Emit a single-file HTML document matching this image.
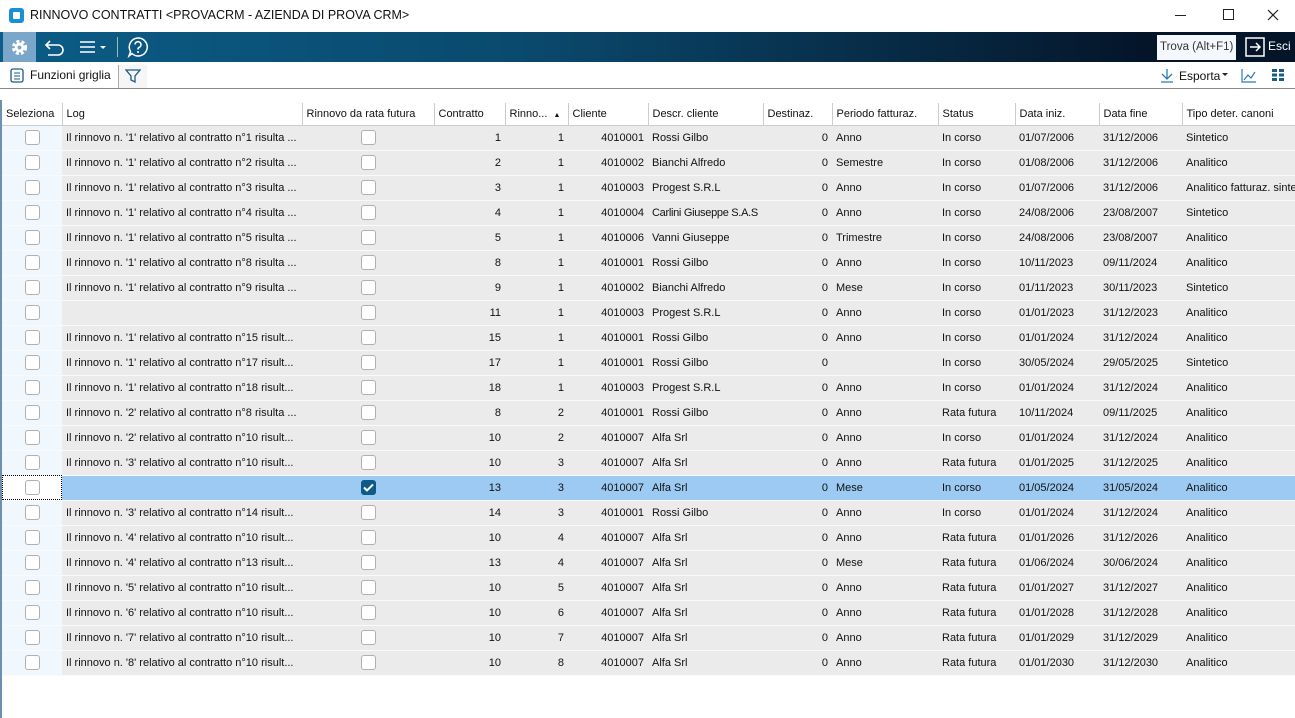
<!DOCTYPE html>
<html><head><meta charset="utf-8"><style>
*{box-sizing:border-box;margin:0;padding:0}
body{width:1295px;height:718px;overflow:hidden;background:#fff;font-family:"Liberation Sans",sans-serif;font-size:11px;color:#111;position:relative}
.title{position:absolute;left:0;top:0;width:1295px;height:32px;background:#fff;font-size:12.5px}
.tb{position:absolute;left:0;top:32px;width:1295px;height:30px;background:linear-gradient(90deg,#0b5c86 0%,#0a4a6e 40%,#061f36 80%,#04152a 88%,#04152a 100%)}
.sb{position:absolute;left:0;top:62px;width:1295px;height:27px;border-bottom:1px solid #888;background:#fff;font-size:12px}
table{position:absolute;left:2px;top:103px;border-collapse:collapse;table-layout:fixed;width:1293px}
td,th{height:25px;white-space:nowrap;overflow:hidden;text-overflow:ellipsis;padding:0 4px;font-weight:normal;border-bottom:1px solid #fafafa;background:#ebebeb}
th{height:22px;background:#fff;text-align:left;border-right:1px solid #ccc;border-bottom:1px solid #ccc;text-overflow:clip}
td.s{background:#f0f7fd;text-align:center}
td.r{text-align:right}
td.c{text-align:center}
.cb{display:inline-block;width:15px;height:15px;border:1px solid #b0b0b0;border-radius:3px;background:#fff;vertical-align:middle}
tr.sel td{background:#9ccaf2}
tr.sel td.s{background:#fff;outline:1px dotted #000;outline-offset:-1px}
.ck{display:inline-block;width:15px;height:15px;border-radius:3px;background:#0d5a87;vertical-align:middle;position:relative}
</style></head><body>
<div class="title">
<div style="position:absolute;left:9px;top:8px;width:15px;height:15px;background:#1a8fd6;border-radius:3px"><div style="position:absolute;left:4px;top:4px;width:7px;height:7px;background:#fff;border-radius:1px"></div></div>
<div style="position:absolute;left:30px;top:8px;color:#111">RINNOVO CONTRATTI &lt;PROVACRM - AZIENDA DI PROVA CRM&gt;</div>
<div style="position:absolute;left:1175px;top:15px;width:11px;height:1px;background:#222"></div>
<div style="position:absolute;left:1223px;top:9px;width:11px;height:11px;border:1px solid #222"></div>
<svg style="position:absolute;left:1267px;top:9px" width="12" height="12" viewBox="0 0 12 12"><path d="M1 1L11 11M11 1L1 11" stroke="#222" stroke-width="1.2"/></svg>
</div>
<div class="tb">
<div style="position:absolute;left:3px;top:0;width:33px;height:30px;background:#7aa7c9"></div>
<svg style="position:absolute;left:10px;top:6px" width="19" height="19" viewBox="0 0 20 20"><circle cx="10" cy="10" r="6" fill="none" stroke="#fff" stroke-width="4" stroke-dasharray="3 2"/><circle cx="10" cy="10" r="5" fill="#fff"/><circle cx="10" cy="10" r="2" fill="#7aa7c9"/></svg>
<svg style="position:absolute;left:44px;top:6px" width="22" height="18" viewBox="0 0 22 18"><path d="M6 3 L2 7 L6 11 M2 7 H14 A5 5 0 0 1 14 17 H4" fill="none" stroke="#fff" stroke-width="1.6"/></svg>
<svg style="position:absolute;left:80px;top:9px" width="28" height="12" viewBox="0 0 28 12"><path d="M0 1H15M0 6H15M0 11H15" stroke="#fff" stroke-width="1.5"/><path d="M20 5H26L23 8Z" fill="#fff"/></svg>
<div style="position:absolute;left:117px;top:5px;width:1px;height:20px;background:#9bb"></div>
<svg style="position:absolute;left:127px;top:4px" width="22" height="22" viewBox="0 0 22 22"><path d="M11 2A9 9 0 1 1 5 17.5L2 20L3.5 15.5A9 9 0 0 1 11 2Z" fill="none" stroke="#fff" stroke-width="1.5"/><path d="M8 8.5A3 3 0 1 1 12 11.5C11 12 11 12.5 11 13.5" fill="none" stroke="#fff" stroke-width="1.6"/><circle cx="11" cy="16" r="1" fill="#fff"/></svg>
<div style="position:absolute;left:1157px;top:3px;width:79px;height:25px;background:#f4f8fc;color:#333;padding:6px 0 0 3px;font-size:11.5px;white-space:nowrap;overflow:hidden">Trova (Alt+F1)</div>
<svg style="position:absolute;left:1245px;top:5px" width="20" height="20" viewBox="0 0 20 20"><path d="M1 1H19V19H1Z" fill="none" stroke="#fff" stroke-width="1.5"/><path d="M5 10H15M11 6L15 10L11 14" fill="none" stroke="#fff" stroke-width="1.5"/></svg>
<div style="position:absolute;left:1268px;top:7px;color:#fff;font-size:12px">Esci</div>
</div>
<div class="sb">
<svg style="position:absolute;left:10px;top:6px" width="14" height="15" viewBox="0 0 14 15"><rect x="1" y="1" width="12" height="13" rx="2" fill="none" stroke="#1a5c85" stroke-width="1.3"/><path d="M4 5H10M4 8H10M4 11H10" stroke="#1a5c85"/></svg>
<div style="position:absolute;left:30px;top:6px">Funzioni griglia</div>
<div style="position:absolute;left:118px;top:3px;width:29px;height:23px;border-left:1px solid #aaa;background:#f6f6f6"></div>
<svg style="position:absolute;left:125px;top:6px" width="16" height="16" viewBox="0 0 16 16"><path d="M1 2H15L10 8V14L6 12V8Z" fill="none" stroke="#1a5c85" stroke-width="1.3"/></svg>
<svg style="position:absolute;left:1160px;top:6px" width="14" height="15" viewBox="0 0 14 15"><path d="M7 1V11M2 6L7 11L12 6M1 14H13" fill="none" stroke="#2a7ab5" stroke-width="1.3"/></svg>
<div style="position:absolute;left:1179px;top:7px">Esporta</div>
<div style="position:absolute;left:1222px;top:11px;width:0;height:0;border-left:3px solid transparent;border-right:3px solid transparent;border-top:3px solid #222"></div>
<svg style="position:absolute;left:1241px;top:6px" width="16" height="15" viewBox="0 0 16 15"><path d="M1 1V14H15M3 12L7 7L10 10L14 4" fill="none" stroke="#2a7ab5" stroke-width="1.2"/></svg>
<svg style="position:absolute;left:1272px;top:7px" width="12" height="12" viewBox="0 0 12 12"><g fill="#1a5c85"><rect x="0" y="0" width="5" height="3"/><rect x="7" y="0" width="5" height="3"/><rect x="0" y="4.5" width="5" height="3"/><rect x="7" y="4.5" width="5" height="3"/><rect x="0" y="9" width="5" height="3"/><rect x="7" y="9" width="5" height="3"/></g></svg>
</div>
<div style="position:absolute;left:0;top:100px;width:2px;height:618px;background:#6d8fb0"></div>
<table>
<colgroup><col style="width:60px"><col style="width:240px"><col style="width:132px"><col style="width:71px"><col style="width:63px"><col style="width:80px"><col style="width:115px"><col style="width:69px"><col style="width:106px"><col style="width:77px"><col style="width:84px"><col style="width:83px"><col style="width:113px"></colgroup>
<tr><th>Seleziona</th><th>Log</th><th>Rinnovo da rata futura</th><th>Contratto</th><th>Rinno... &nbsp;<span style="font-size:7px">▲</span></th><th>Cliente</th><th>Descr. cliente</th><th>Destinaz.</th><th>Periodo fatturaz.</th><th>Status</th><th>Data iniz.</th><th>Data fine</th><th>Tipo deter. canoni</th></tr>
<tr><td class="s"><span class="cb"></span></td><td>Il rinnovo n. '1' relativo al contratto n°1 risulta ...</td><td class="c"><span class="cb"></span></td><td class="r">1</td><td class="r">1</td><td class="r">4010001</td><td>Rossi Gilbo</td><td class="r">0</td><td>Anno</td><td>In corso</td><td>01/07/2006</td><td>31/12/2006</td><td>Sintetico</td></tr>
<tr><td class="s"><span class="cb"></span></td><td>Il rinnovo n. '1' relativo al contratto n°2 risulta ...</td><td class="c"><span class="cb"></span></td><td class="r">2</td><td class="r">1</td><td class="r">4010002</td><td>Bianchi Alfredo</td><td class="r">0</td><td>Semestre</td><td>In corso</td><td>01/08/2006</td><td>31/12/2006</td><td>Analitico</td></tr>
<tr><td class="s"><span class="cb"></span></td><td>Il rinnovo n. '1' relativo al contratto n°3 risulta ...</td><td class="c"><span class="cb"></span></td><td class="r">3</td><td class="r">1</td><td class="r">4010003</td><td>Progest S.R.L</td><td class="r">0</td><td>Anno</td><td>In corso</td><td>01/07/2006</td><td>31/12/2006</td><td style="text-overflow:clip">Analitico fatturaz. sinte</td></tr>
<tr><td class="s"><span class="cb"></span></td><td>Il rinnovo n. '1' relativo al contratto n°4 risulta ...</td><td class="c"><span class="cb"></span></td><td class="r">4</td><td class="r">1</td><td class="r">4010004</td><td style="text-overflow:clip;letter-spacing:-0.3px">Carlini Giuseppe S.A.S</td><td class="r">0</td><td>Anno</td><td>In corso</td><td>24/08/2006</td><td>23/08/2007</td><td>Sintetico</td></tr>
<tr><td class="s"><span class="cb"></span></td><td>Il rinnovo n. '1' relativo al contratto n°5 risulta ...</td><td class="c"><span class="cb"></span></td><td class="r">5</td><td class="r">1</td><td class="r">4010006</td><td>Vanni Giuseppe</td><td class="r">0</td><td>Trimestre</td><td>In corso</td><td>24/08/2006</td><td>23/08/2007</td><td>Analitico</td></tr>
<tr><td class="s"><span class="cb"></span></td><td>Il rinnovo n. '1' relativo al contratto n°8 risulta ...</td><td class="c"><span class="cb"></span></td><td class="r">8</td><td class="r">1</td><td class="r">4010001</td><td>Rossi Gilbo</td><td class="r">0</td><td>Anno</td><td>In corso</td><td>10/11/2023</td><td>09/11/2024</td><td>Analitico</td></tr>
<tr><td class="s"><span class="cb"></span></td><td>Il rinnovo n. '1' relativo al contratto n°9 risulta ...</td><td class="c"><span class="cb"></span></td><td class="r">9</td><td class="r">1</td><td class="r">4010002</td><td>Bianchi Alfredo</td><td class="r">0</td><td>Mese</td><td>In corso</td><td>01/11/2023</td><td>30/11/2023</td><td>Sintetico</td></tr>
<tr><td class="s"><span class="cb"></span></td><td></td><td class="c"><span class="cb"></span></td><td class="r">11</td><td class="r">1</td><td class="r">4010003</td><td>Progest S.R.L</td><td class="r">0</td><td>Anno</td><td>In corso</td><td>01/01/2023</td><td>31/12/2023</td><td>Analitico</td></tr>
<tr><td class="s"><span class="cb"></span></td><td>Il rinnovo n. '1' relativo al contratto n°15 risult...</td><td class="c"><span class="cb"></span></td><td class="r">15</td><td class="r">1</td><td class="r">4010001</td><td>Rossi Gilbo</td><td class="r">0</td><td>Anno</td><td>In corso</td><td>01/01/2024</td><td>31/12/2024</td><td>Analitico</td></tr>
<tr><td class="s"><span class="cb"></span></td><td>Il rinnovo n. '1' relativo al contratto n°17 risult...</td><td class="c"><span class="cb"></span></td><td class="r">17</td><td class="r">1</td><td class="r">4010001</td><td>Rossi Gilbo</td><td class="r">0</td><td></td><td>In corso</td><td>30/05/2024</td><td>29/05/2025</td><td>Sintetico</td></tr>
<tr><td class="s"><span class="cb"></span></td><td>Il rinnovo n. '1' relativo al contratto n°18 risult...</td><td class="c"><span class="cb"></span></td><td class="r">18</td><td class="r">1</td><td class="r">4010003</td><td>Progest S.R.L</td><td class="r">0</td><td>Anno</td><td>In corso</td><td>01/01/2024</td><td>31/12/2024</td><td>Analitico</td></tr>
<tr><td class="s"><span class="cb"></span></td><td>Il rinnovo n. '2' relativo al contratto n°8 risulta ...</td><td class="c"><span class="cb"></span></td><td class="r">8</td><td class="r">2</td><td class="r">4010001</td><td>Rossi Gilbo</td><td class="r">0</td><td>Anno</td><td>Rata futura</td><td>10/11/2024</td><td>09/11/2025</td><td>Analitico</td></tr>
<tr><td class="s"><span class="cb"></span></td><td>Il rinnovo n. '2' relativo al contratto n°10 risult...</td><td class="c"><span class="cb"></span></td><td class="r">10</td><td class="r">2</td><td class="r">4010007</td><td>Alfa Srl</td><td class="r">0</td><td>Anno</td><td>In corso</td><td>01/01/2024</td><td>31/12/2024</td><td>Analitico</td></tr>
<tr><td class="s"><span class="cb"></span></td><td>Il rinnovo n. '3' relativo al contratto n°10 risult...</td><td class="c"><span class="cb"></span></td><td class="r">10</td><td class="r">3</td><td class="r">4010007</td><td>Alfa Srl</td><td class="r">0</td><td>Anno</td><td>Rata futura</td><td>01/01/2025</td><td>31/12/2025</td><td>Analitico</td></tr>
<tr class="sel"><td class="s"><span class="cb"></span></td><td></td><td class="c"><span class="ck"><svg style="position:absolute;left:2px;top:3px" width="11" height="9" viewBox="0 0 11 9"><path d="M1 4.5L4 7.5L10 1.5" fill="none" stroke="#fff" stroke-width="2"/></svg></span></td><td class="r">13</td><td class="r">3</td><td class="r">4010007</td><td>Alfa Srl</td><td class="r">0</td><td>Mese</td><td>In corso</td><td>01/05/2024</td><td>31/05/2024</td><td>Analitico</td></tr>
<tr><td class="s"><span class="cb"></span></td><td>Il rinnovo n. '3' relativo al contratto n°14 risult...</td><td class="c"><span class="cb"></span></td><td class="r">14</td><td class="r">3</td><td class="r">4010001</td><td>Rossi Gilbo</td><td class="r">0</td><td>Anno</td><td>In corso</td><td>01/01/2024</td><td>31/12/2024</td><td>Analitico</td></tr>
<tr><td class="s"><span class="cb"></span></td><td>Il rinnovo n. '4' relativo al contratto n°10 risult...</td><td class="c"><span class="cb"></span></td><td class="r">10</td><td class="r">4</td><td class="r">4010007</td><td>Alfa Srl</td><td class="r">0</td><td>Anno</td><td>Rata futura</td><td>01/01/2026</td><td>31/12/2026</td><td>Analitico</td></tr>
<tr><td class="s"><span class="cb"></span></td><td>Il rinnovo n. '4' relativo al contratto n°13 risult...</td><td class="c"><span class="cb"></span></td><td class="r">13</td><td class="r">4</td><td class="r">4010007</td><td>Alfa Srl</td><td class="r">0</td><td>Mese</td><td>Rata futura</td><td>01/06/2024</td><td>30/06/2024</td><td>Analitico</td></tr>
<tr><td class="s"><span class="cb"></span></td><td>Il rinnovo n. '5' relativo al contratto n°10 risult...</td><td class="c"><span class="cb"></span></td><td class="r">10</td><td class="r">5</td><td class="r">4010007</td><td>Alfa Srl</td><td class="r">0</td><td>Anno</td><td>Rata futura</td><td>01/01/2027</td><td>31/12/2027</td><td>Analitico</td></tr>
<tr><td class="s"><span class="cb"></span></td><td>Il rinnovo n. '6' relativo al contratto n°10 risult...</td><td class="c"><span class="cb"></span></td><td class="r">10</td><td class="r">6</td><td class="r">4010007</td><td>Alfa Srl</td><td class="r">0</td><td>Anno</td><td>Rata futura</td><td>01/01/2028</td><td>31/12/2028</td><td>Analitico</td></tr>
<tr><td class="s"><span class="cb"></span></td><td>Il rinnovo n. '7' relativo al contratto n°10 risult...</td><td class="c"><span class="cb"></span></td><td class="r">10</td><td class="r">7</td><td class="r">4010007</td><td>Alfa Srl</td><td class="r">0</td><td>Anno</td><td>Rata futura</td><td>01/01/2029</td><td>31/12/2029</td><td>Analitico</td></tr>
<tr><td class="s"><span class="cb"></span></td><td>Il rinnovo n. '8' relativo al contratto n°10 risult...</td><td class="c"><span class="cb"></span></td><td class="r">10</td><td class="r">8</td><td class="r">4010007</td><td>Alfa Srl</td><td class="r">0</td><td>Anno</td><td>Rata futura</td><td>01/01/2030</td><td>31/12/2030</td><td>Analitico</td></tr>
</table>
</body></html>
